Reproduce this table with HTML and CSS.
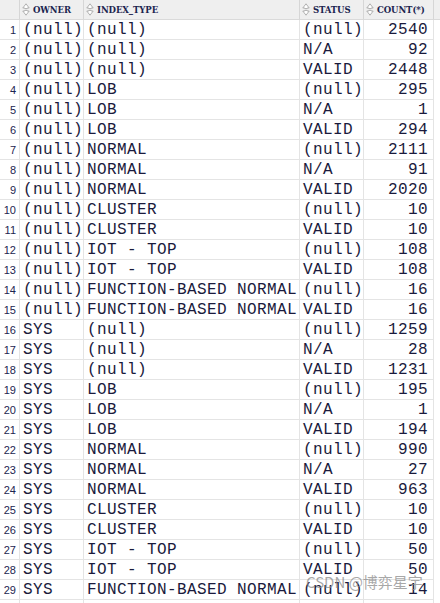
FILE: index.html
```html
<!DOCTYPE html>
<html>
<head>
<meta charset="utf-8">
<link rel="stylesheet" href="styles.css">
</head>
<body>
<div class="grid" id="grid">
  <div class="hd rn"></div>
  <div class="hd"><svg class="sort" viewBox="0 0 8 13"><path d="M4 0.8 L7.2 5 H5.2 V5.6 H2.8 V5 H0.8 Z M2.8 7.4 H5.2 V8 H7.2 L4 12.2 L0.8 8 H2.8 Z" fill="#fff" stroke="#a8a8a8" stroke-width="0.9"/></svg><span>OWNER</span></div>
  <div class="hd"><svg class="sort" viewBox="0 0 8 13"><path d="M4 0.8 L7.2 5 H5.2 V5.6 H2.8 V5 H0.8 Z M2.8 7.4 H5.2 V8 H7.2 L4 12.2 L0.8 8 H2.8 Z" fill="#fff" stroke="#a8a8a8" stroke-width="0.9"/></svg><span>INDEX_TYPE</span></div>
  <div class="hd"><svg class="sort" viewBox="0 0 8 13"><path d="M4 0.8 L7.2 5 H5.2 V5.6 H2.8 V5 H0.8 Z M2.8 7.4 H5.2 V8 H7.2 L4 12.2 L0.8 8 H2.8 Z" fill="#fff" stroke="#a8a8a8" stroke-width="0.9"/></svg><span>STATUS</span></div>
  <div class="hd"><svg class="sort" viewBox="0 0 8 13"><path d="M4 0.8 L7.2 5 H5.2 V5.6 H2.8 V5 H0.8 Z M2.8 7.4 H5.2 V8 H7.2 L4 12.2 L0.8 8 H2.8 Z" fill="#fff" stroke="#a8a8a8" stroke-width="0.9"/></svg><span>COUNT(*)</span></div>
  <div class="hd fill"></div>

  <div class="rn">1</div><div class="c">(null)</div><div class="c">(null)</div><div class="c">(null)</div><div class="c num">2540</div><div class="fill"></div>
  <div class="rn">2</div><div class="c">(null)</div><div class="c">(null)</div><div class="c">N/A</div><div class="c num">92</div><div class="fill"></div>
  <div class="rn">3</div><div class="c">(null)</div><div class="c">(null)</div><div class="c">VALID</div><div class="c num">2448</div><div class="fill"></div>
  <div class="rn">4</div><div class="c">(null)</div><div class="c">LOB</div><div class="c">(null)</div><div class="c num">295</div><div class="fill"></div>
  <div class="rn">5</div><div class="c">(null)</div><div class="c">LOB</div><div class="c">N/A</div><div class="c num">1</div><div class="fill"></div>
  <div class="rn">6</div><div class="c">(null)</div><div class="c">LOB</div><div class="c">VALID</div><div class="c num">294</div><div class="fill"></div>
  <div class="rn">7</div><div class="c">(null)</div><div class="c">NORMAL</div><div class="c">(null)</div><div class="c num">2111</div><div class="fill"></div>
  <div class="rn">8</div><div class="c">(null)</div><div class="c">NORMAL</div><div class="c">N/A</div><div class="c num">91</div><div class="fill"></div>
  <div class="rn">9</div><div class="c">(null)</div><div class="c">NORMAL</div><div class="c">VALID</div><div class="c num">2020</div><div class="fill"></div>
  <div class="rn">10</div><div class="c">(null)</div><div class="c">CLUSTER</div><div class="c">(null)</div><div class="c num">10</div><div class="fill"></div>
  <div class="rn">11</div><div class="c">(null)</div><div class="c">CLUSTER</div><div class="c">VALID</div><div class="c num">10</div><div class="fill"></div>
  <div class="rn">12</div><div class="c">(null)</div><div class="c">IOT - TOP</div><div class="c">(null)</div><div class="c num">108</div><div class="fill"></div>
  <div class="rn">13</div><div class="c">(null)</div><div class="c">IOT - TOP</div><div class="c">VALID</div><div class="c num">108</div><div class="fill"></div>
  <div class="rn">14</div><div class="c">(null)</div><div class="c">FUNCTION-BASED NORMAL</div><div class="c">(null)</div><div class="c num">16</div><div class="fill"></div>
  <div class="rn">15</div><div class="c">(null)</div><div class="c">FUNCTION-BASED NORMAL</div><div class="c">VALID</div><div class="c num">16</div><div class="fill"></div>
  <div class="rn">16</div><div class="c">SYS</div><div class="c">(null)</div><div class="c">(null)</div><div class="c num">1259</div><div class="fill"></div>
  <div class="rn">17</div><div class="c">SYS</div><div class="c">(null)</div><div class="c">N/A</div><div class="c num">28</div><div class="fill"></div>
  <div class="rn">18</div><div class="c">SYS</div><div class="c">(null)</div><div class="c">VALID</div><div class="c num">1231</div><div class="fill"></div>
  <div class="rn">19</div><div class="c">SYS</div><div class="c">LOB</div><div class="c">(null)</div><div class="c num">195</div><div class="fill"></div>
  <div class="rn">20</div><div class="c">SYS</div><div class="c">LOB</div><div class="c">N/A</div><div class="c num">1</div><div class="fill"></div>
  <div class="rn">21</div><div class="c">SYS</div><div class="c">LOB</div><div class="c">VALID</div><div class="c num">194</div><div class="fill"></div>
  <div class="rn">22</div><div class="c">SYS</div><div class="c">NORMAL</div><div class="c">(null)</div><div class="c num">990</div><div class="fill"></div>
  <div class="rn">23</div><div class="c">SYS</div><div class="c">NORMAL</div><div class="c">N/A</div><div class="c num">27</div><div class="fill"></div>
  <div class="rn">24</div><div class="c">SYS</div><div class="c">NORMAL</div><div class="c">VALID</div><div class="c num">963</div><div class="fill"></div>
  <div class="rn">25</div><div class="c">SYS</div><div class="c">CLUSTER</div><div class="c">(null)</div><div class="c num">10</div><div class="fill"></div>
  <div class="rn">26</div><div class="c">SYS</div><div class="c">CLUSTER</div><div class="c">VALID</div><div class="c num">10</div><div class="fill"></div>
  <div class="rn">27</div><div class="c">SYS</div><div class="c">IOT - TOP</div><div class="c">(null)</div><div class="c num">50</div><div class="fill"></div>
  <div class="rn">28</div><div class="c">SYS</div><div class="c">IOT - TOP</div><div class="c">VALID</div><div class="c num">50</div><div class="fill"></div>
  <div class="rn">29</div><div class="c">SYS</div><div class="c">FUNCTION-BASED NORMAL</div><div class="c">(null)</div><div class="c num">14</div><div class="fill"></div>
  <div class="rn"></div><div class="c"></div><div class="c"></div><div class="c"></div><div class="c"></div><div class="fill"></div>
</div>
<div class="watermark">CSDN @博弈星宇</div>
</body>
</html>
```

FILE: styles.css
```css
html, body {
  margin: 0;
  padding: 0;
  background: #fff;
  width: 440px;
  height: 603px;
  overflow: hidden;
}
body {
  position: relative;
}
.grid {
  display: grid;
  grid-template-columns: 20px 64px 216px 64px 70px 6px;
  grid-auto-rows: 20px;
}
.grid > div {
  box-sizing: border-box;
  border-right: 1px solid #e4e4e4;
  border-bottom: 1px solid #e4e4e4;
  overflow: hidden;
  white-space: nowrap;
}
.grid > .fill {
  border-right: none;
  border-bottom: none;
}
.grid > .hd {
  background: #efefef;
  border-right: 1px solid #d6d6d6;
  border-bottom: 1px solid #dadada;
  display: flex;
  align-items: center;
  padding-left: 2px;
  gap: 3px;
  font-family: "DejaVu Serif", "Liberation Serif", serif;
  font-stretch: condensed;
  font-size: 9.5px;
  font-weight: bold;
  color: #1c2550;
  letter-spacing: -0.1px;
}
.grid > .hd.fill {
  border-right: none;
}
.sort {
  width: 8px;
  height: 13px;
  flex: none;
}
.rn {
  font-family: "Liberation Sans", Arial, sans-serif;
  font-size: 11px;
  color: #1c2550;
  text-align: right;
  padding-right: 3px;
  line-height: 20px;
}
.c {
  font-family: "Liberation Mono", "Courier New", monospace;
  font-size: 16px;
  letter-spacing: 0.4px;
  color: #1a1a3c;
  line-height: 20px;
  padding-left: 3px;
}
.c.num {
  text-align: right;
  padding-left: 0;
  padding-right: 5px;
}
.watermark {
  position: absolute;
  left: 306px;
  top: 571px;
  font-family: "Noto Sans CJK SC", "Noto Sans", sans-serif;
  font-size: 15px;
  color: rgba(140, 140, 140, 0.75);
  white-space: nowrap;
}
```
